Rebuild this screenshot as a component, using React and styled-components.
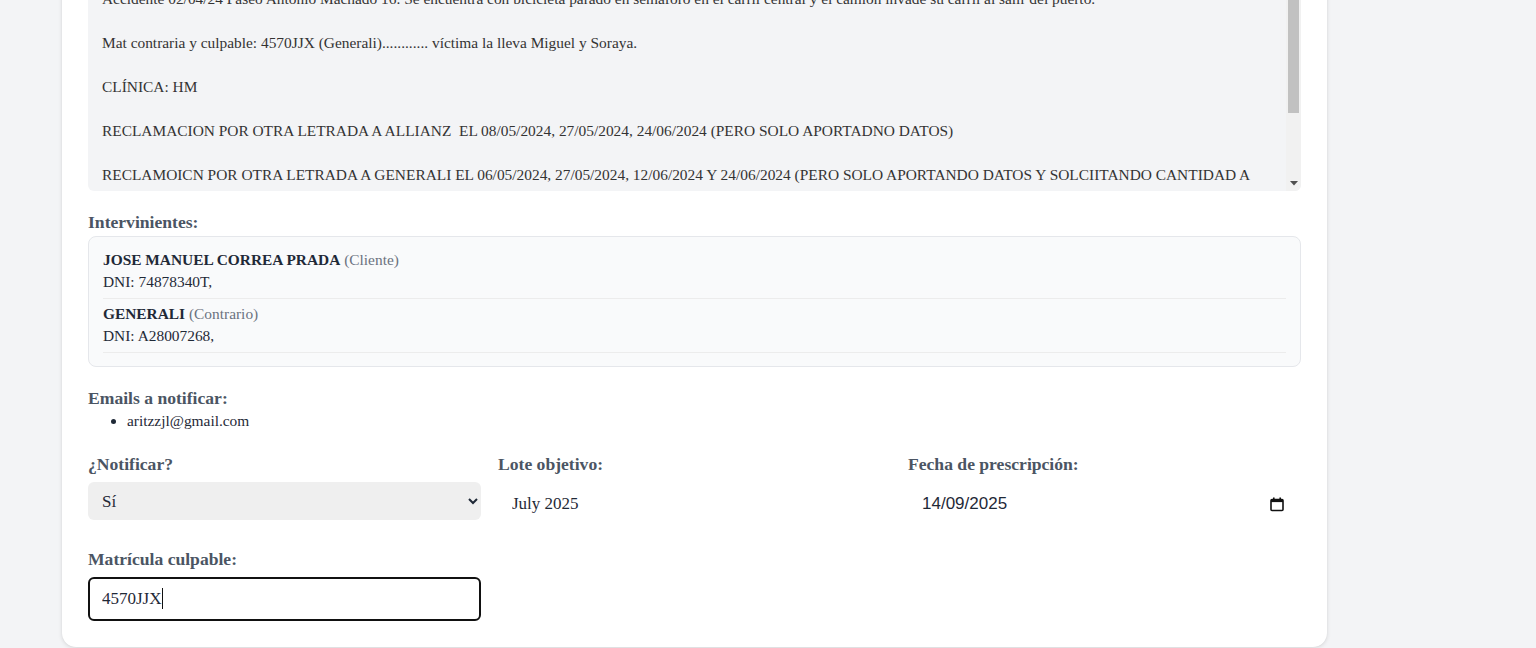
import React from "react";
import styled, { createGlobalStyle } from "styled-components";

const GlobalStyle = createGlobalStyle`
  html, body {
    margin: 0;
    padding: 0;
    background: #f3f4f6;
    font-family: "Liberation Serif", "Times New Roman", serif;
    color: #1f2937;
  }
  * { box-sizing: border-box; }
`;

const Page = styled.div`
  padding: 0 209px 1px 62px;
  margin-top: -50px;
`;

const Card = styled.section`
  background: #ffffff;
  border-radius: 14px;
  box-shadow: 0 1px 4px rgba(0, 0, 0, 0.12), 0 0 1px rgba(0, 0, 0, 0.08);
  padding: 26px;
`;

const NotesBox = styled.div`
  display: flex;
  height: 215px;
  background: #f3f4f6;
  border-radius: 6px;
  overflow: hidden;
`;

const Notes = styled.textarea`
  flex: 1;
  min-width: 0;
  display: block;
  padding: 12px 14px;
  border: none;
  background: transparent;
  color: #333333;
  font-family: "Liberation Serif", "Times New Roman", serif;
  font-size: 15.4px;
  line-height: 22px;
  resize: none;
  overflow: hidden;
  outline: none;
`;

const ScrollBar = styled.div`
  width: 15px;
  display: flex;
  flex-direction: column;
  background: #f1f1f1;
`;

const ScrollButton = styled.div`
  height: 15px;
  display: flex;
  align-items: center;
  justify-content: center;
`;

const ScrollTrack = styled.div`
  flex: 1;
  padding: 0 2px;
`;

const Thumb = styled.div`
  height: ${(p) => p.$size}px;
  background: #c1c1c1;
`;

const Arrow = ({ up }) => (
  <svg width="8" height="5" viewBox="0 0 8 5">
    <path d={up ? "M0 5H8L4 0.5Z" : "M0 0H8L4 4.5Z"} fill="#505050" />
  </svg>
);

const Section = styled.div`
  margin-top: ${(p) => p.$top || 20}px;
`;

const Label = styled.div`
  font-size: 17.6px;
  font-weight: 700;
  line-height: 24px;
  color: #4b5563;
  margin-bottom: ${(p) => p.$gap || 0}px;
`;

const PartyBox = styled.div`
  background: #f9fafb;
  border: 1px solid #e5e7eb;
  border-radius: 8px;
  padding: 8px 14px 13px;
`;

const PartyRow = styled.div`
  padding: 4px 0 5px;
  border-bottom: 1px solid #ececec;
  font-size: 15.4px;
  line-height: 22px;
  color: #1f2937;
`;

const Name = styled.strong`
  font-weight: 700;
`;

const Role = styled.span`
  color: #6b7280;
`;

const EmailList = styled.ul`
  margin: 0;
  padding-left: 39px;
  font-size: 15.4px;
  line-height: 22px;
  color: #1f2937;
`;

const Grid = styled.div`
  display: grid;
  grid-template-columns: repeat(3, 1fr);
  column-gap: 17px;
  row-gap: 21px;
  margin-top: 20px;
`;

const Field = styled.div`
  display: flex;
  flex-direction: column;
  min-width: 0;
`;

const Select = styled.select`
  height: 38px;
  width: 100%;
  border: none;
  border-radius: 6px;
  background: #efefef;
  padding: 0 10px;
  font-family: "Liberation Serif", "Times New Roman", serif;
  font-size: 17px;
  color: #1f2937;
  outline: none;
`;

const InputWrap = styled.div`
  position: relative;
`;

const TextInput = styled.input`
  display: block;
  height: 44px;
  width: 100%;
  padding: 0 12px;
  border: 2px solid ${(p) => (p.$active ? "#111111" : "transparent")};
  border-radius: 6px;
  background: ${(p) => (p.$active ? "#ffffff" : "transparent")};
  font-family: "Liberation Serif", "Times New Roman", serif;
  font-size: 17px;
  color: #1f2937;
  outline: none;
`;

const Caret = styled.span`
  position: absolute;
  left: ${(p) => p.$left}px;
  top: 11px;
  width: 1px;
  height: 21px;
  background: #111111;
`;

const DateField = styled.div`
  height: 44px;
  display: flex;
  align-items: center;
  padding: 0 17px 0 14px;
`;

const DateText = styled.input`
  flex: 1;
  min-width: 0;
  border: none;
  background: transparent;
  padding: 0;
  font-family: "Liberation Sans", Arial, sans-serif;
  font-size: 17px;
  color: #1f2937;
  outline: none;
`;

const CalendarIcon = () => (
  <svg width="14" height="15" viewBox="0 0 14 15" fill="none">
    <rect x="1" y="2.5" width="12" height="11" rx="1" stroke="#111" strokeWidth="1.6" />
    <rect x="1" y="2.5" width="12" height="2.6" fill="#111" />
    <rect x="3" y="0.5" width="1.6" height="3" fill="#111" />
    <rect x="9.4" y="0.5" width="1.6" height="3" fill="#111" />
  </svg>
);

const notesText =
  "Accidente 02/04/24 Paseo Antonio Machado 16. Se encuentra con bicicleta parado en semaforo en el carril central y el camion invade su carril al salir del puerto.\n\n" +
  "Mat contraria y culpable: 4570JJX (Generali)............ víctima la lleva Miguel y Soraya.\n\n" +
  "CLÍNICA: HM\n\n" +
  "RECLAMACION POR OTRA LETRADA A ALLIANZ  EL 08/05/2024, 27/05/2024, 24/06/2024 (PERO SOLO APORTADNO DATOS)\n\n" +
  "RECLAMOICN POR OTRA LETRADA A GENERALI EL 06/05/2024, 27/05/2024, 12/06/2024 Y 24/06/2024 (PERO SOLO APORTANDO DATOS Y SOLCIITANDO CANTIDAD A CUENTA)\n\n" +
  "PENDIENTE DE RESPUESTA\n";

const parties = [
  { name: "JOSE MANUEL CORREA PRADA", role: "Cliente", dni: "74878340T" },
  { name: "GENERALI", role: "Contrario", dni: "A28007268" },
];

export default function App() {
  return (
    <>
      <GlobalStyle />
      <Page>
        <Card>
          <NotesBox>
            <Notes defaultValue={notesText} />
            <ScrollBar>
              <ScrollButton>
                <Arrow up />
              </ScrollButton>
              <ScrollTrack>
                <Thumb $size={122} />
              </ScrollTrack>
              <ScrollButton>
                <Arrow />
              </ScrollButton>
            </ScrollBar>
          </NotesBox>

          <Section $top={19}>
            <Label $gap={2}>Intervinientes:</Label>
            <PartyBox>
              {parties.map((p) => (
                <PartyRow key={p.name}>
                  <div>
                    <Name>{p.name}</Name> <Role>({p.role})</Role>
                  </div>
                  <div>DNI: {p.dni},</div>
                </PartyRow>
              ))}
            </PartyBox>
          </Section>

          <Section $top={19}>
            <Label>Emails a notificar:</Label>
            <EmailList>
              <li>aritzzjl@gmail.com</li>
            </EmailList>
          </Section>

          <Grid>
            <Field>
              <Label $gap={6}>¿Notificar?</Label>
              <Select defaultValue="si">
                <option value="si">Sí</option>
                <option value="no">No</option>
              </Select>
            </Field>
            <Field>
              <Label $gap={6}>Lote objetivo:</Label>
              <TextInput defaultValue="July 2025" readOnly />
            </Field>
            <Field>
              <Label $gap={6}>Fecha de prescripción:</Label>
              <DateField>
                <DateText defaultValue="14/09/2025" />
                <CalendarIcon />
              </DateField>
            </Field>
            <Field>
              <Label $gap={6}>Matrícula culpable:</Label>
              <InputWrap>
                <TextInput $active defaultValue="4570JJX" />
                <Caret $left={74} />
              </InputWrap>
            </Field>
          </Grid>
        </Card>
      </Page>
    </>
  );
}
